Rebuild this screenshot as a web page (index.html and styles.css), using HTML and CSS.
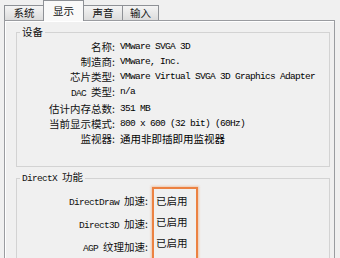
FILE: index.html
```html
<!DOCTYPE html>
<html lang="zh-CN">
<head>
    <meta charset="UTF-8">
    <title>显示</title>
    <link rel="stylesheet" href="styles.css">
</head>
<body>
    <div class="tabs">
        <div class="tab tab-sys">系统</div>
        <div class="tab tab-disp active">显示</div>
        <div class="tab tab-snd">声音</div>
        <div class="tab tab-in">输入</div>
    </div>
    <div class="panel">
        <fieldset class="group">
            <legend>设备</legend>
            <div class="info">
                <div class="label">名称:</div><div class="value">VMware SVGA 3D</div>
                <div class="label">制造商:</div><div class="value">VMware, Inc.</div>
                <div class="label">芯片类型:</div><div class="value">VMware Virtual SVGA 3D Graphics Adapter</div>
                <div class="label"><span class="mono">DAC</span>类型:</div><div class="value">n/a</div>
                <div class="label">估计内存总数:</div><div class="value">351 MB</div>
                <div class="label">当前显示模式:</div><div class="value">800 x 600 (32 bit) (60Hz)</div>
                <div class="label">监视器:</div><div class="value cjk">通用非即插即用监视器</div>
            </div>
        </fieldset>
        <fieldset class="group group-dx">
            <legend><span class="mono">DirectX</span>功能</legend>
            <div class="dx">
                <div class="dx-labels">
                    <div><span class="mono">DirectDraw</span>加速:</div>
                    <div><span class="mono">Direct3D</span>加速:</div>
                    <div><span class="mono">AGP</span>纹理加速:</div>
                </div>
                <div class="dx-values">
                    <div>已启用</div>
                    <div>已启用</div>
                    <div>已启用</div>
                </div>
            </div>
        </fieldset>
    </div>
</body>
</html>
```

FILE: styles.css
```css
html, body {
    margin: 0;
    padding: 0;
}
body {
    width: 340px;
    height: 258px;
    overflow: hidden;
    background-color: #f0f0f0;
    color: #111;
    font-family: "Noto Sans CJK SC", sans-serif;
    font-size: 10.5px;
}
.mono {
    margin-right: 5px;
    font-family: "Liberation Mono", monospace;
    font-size: 9.5px;
    letter-spacing: -0.7px;
}
.tabs {
    display: flex;
    align-items: flex-end;
    height: 20px;
    padding-left: 4px;
}
.tab {
    box-sizing: border-box;
    height: 15px;
    margin-right: -1px;
    border: 1px solid #8e9196;
    border-bottom: none;
    background: linear-gradient(#f4f4f4, #dcdcdc);
    text-align: center;
    line-height: 14px;
}
.tab-sys { width: 40px; }
.tab-disp { width: 41px; }
.tab-snd { width: 40px; }
.tab-in { width: 37px; }
.tab.active {
    position: relative;
    z-index: 1;
    height: 21px;
    margin-bottom: -1px;
    background: #f9f9f9;
    line-height: 20px;
}
.panel {
    width: 331px;
    height: 238px;
    margin-left: 4px;
    box-sizing: border-box;
    border: 1px solid #9a9ca0;
    border-bottom: none;
    box-shadow: inset 1px 1px 0 #fff;
    overflow: hidden;
}
.group {
    margin: 4px 4px 0 11px;
    padding: 0 0 20px 0;
    border: 1px solid #d3d3d3;
    min-width: 0;
}
.group legend {
    margin-left: 3px;
    padding: 0 2px;
    line-height: 14px;
}
.info {
    display: grid;
    grid-template-columns: 98px 1fr;
    column-gap: 5px;
    line-height: 15px;
}
.label {
    text-align: right;
    white-space: nowrap;
}
.value {
    color: #000;
    font-family: "Liberation Mono", monospace;
    font-size: 9.5px;
    letter-spacing: -0.7px;
    white-space: nowrap;
}
.value.cjk {
    font-family: "Noto Sans CJK SC", sans-serif;
    font-size: 10.5px;
    letter-spacing: 0;
}
.group-dx {
    margin-top: 3px;
    padding-bottom: 4px;
}
.dx {
    display: flex;
    gap: 4px;
    margin-top: 1px;
    line-height: 21px;
}
.dx-labels {
    width: 131px;
    padding: 3px 0;
    text-align: right;
    white-space: nowrap;
}
.dx-values {
    padding: 1px 8px 1px 2px;
    border: 2px solid #ec8242;
    box-shadow: 0 0 2px 1px rgba(240, 150, 90, 0.45);
}
```
